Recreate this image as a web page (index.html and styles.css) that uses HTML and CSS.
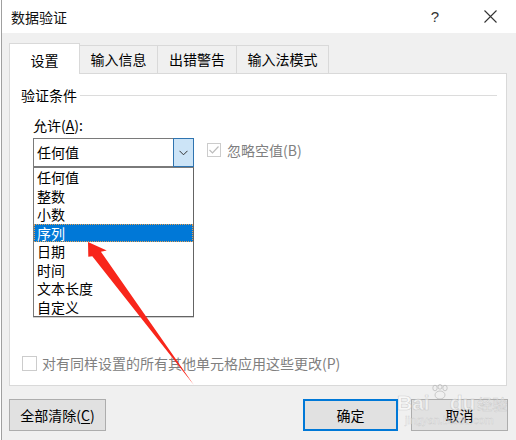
FILE: index.html
```html
<!DOCTYPE html>
<html lang="zh">
<head>
<meta charset="utf-8">
<title>数据验证</title>
<link rel="stylesheet" href="styles.css">
</head>
<body>
<div class="window">
  <div class="titlebar">
    <span class="title">数据验证</span>
    <span class="tb-btn help">?</span>
    <span class="tb-btn close">
      <svg width="13" height="13" viewBox="0 0 13 13"><path d="M0.5 0.5 L12.5 12.5 M12.5 0.5 L0.5 12.5" stroke="#333" stroke-width="1.1" fill="none"/></svg>
    </span>
  </div>
  <div class="main">
    <div class="tabs">
      <div class="tab active w1">设置</div>
      <div class="tab w2">输入信息</div>
      <div class="tab w3">出错警告</div>
      <div class="tab w4">输入法模式</div>
    </div>
    <div class="panel">
      <div class="group-head"><span>验证条件</span><span class="rule"></span></div>
      <div class="allow-label">允许(<u>A</u>):</div>
      <div class="row">
        <div class="combo">
          <span class="combo-text">任何值</span>
          <span class="combo-btn">
            <svg width="9" height="6" viewBox="0 0 9 6"><polyline points="0.5,0.8 4.5,4.8 8.5,0.8" fill="none" stroke="#333" stroke-width="1"/></svg>
          </span>
          <ul class="list">
            <li>任何值</li>
            <li>整数</li>
            <li>小数</li>
            <li class="selected">序列</li>
            <li>日期</li>
            <li>时间</li>
            <li>文本长度</li>
            <li>自定义</li>
          </ul>
        </div>
        <div class="check ignore">
          <span class="box checked">
            <svg width="12" height="12" viewBox="0 0 12 12"><polyline points="1.5,6 4.5,9 10.5,2.5" fill="none" stroke="#bcbcbc" stroke-width="1.2"/></svg>
          </span>
          <span class="check-text">忽略空值(B)</span>
        </div>
      </div>
      <div class="check apply">
        <span class="box big"></span>
        <span class="check-text">对有同样设置的所有其他单元格应用这些更改(P)</span>
      </div>
    </div>
    <div class="footer">
      <button class="btn clear">全部清除(<u>C</u>)</button>
      <span class="spacer"></span>
      <button class="btn ok">确定</button>
      <button class="btn cancel">取消</button>
    </div>
  </div>
</div>
<svg class="arrow" width="516" height="440" viewBox="0 0 516 440">
  <polygon transform="translate(88,242) rotate(53.5)" points="0,0 18,-10 15.5,-4.6 178,0 14,5 12,8.5" fill="#f8261b"/>
</svg>
<div class="wm">
  <div class="wm-line"><span class="wm-big">Bai</span><span class="wm-paw">
    <svg width="20" height="16" viewBox="0 0 20 16"><g fill="none" stroke="rgba(170,170,170,0.55)" stroke-width="1"><ellipse cx="5" cy="4" rx="2.2" ry="2.8"/><ellipse cx="10" cy="2.8" rx="2" ry="2.4"/><ellipse cx="15" cy="4" rx="2.2" ry="2.8"/><ellipse cx="10" cy="11" rx="5" ry="4"/></g></svg>
  </span><span class="wm-big">du</span><span class="wm-cn">经验</span></div>
  <div class="wm-url">jingyan.baidu.com</div>
</div>
</body>
</html>
```

FILE: styles.css
```css
html, body {
  margin: 0;
  padding: 0;
}
body {
  width: 516px;
  height: 440px;
  overflow: hidden;
  background: #ffffff;
  font-family: "Noto Sans CJK SC", "Noto Sans", "Liberation Sans", sans-serif;
  font-size: 14px;
  color: #000;
  position: relative;
}
.window {
  box-sizing: border-box;
  width: 515px;
  height: 440px;
  margin-left: 1px;
  border-left: 1px solid #a0a0a0;
  display: flex;
  flex-direction: column;
}
.titlebar {
  height: 33px;
  background: #ffffff;
  display: flex;
  align-items: center;
  padding-right: 6px;
}
.title {
  padding-left: 9px;
  font-size: 14px;
  line-height: 20px;
  color: #111;
}
.tb-btn {
  width: 40px;
  height: 33px;
  display: flex;
  align-items: center;
  justify-content: center;
}
.help {
  margin-left: auto;
  font-family: "Liberation Sans", sans-serif;
  font-size: 15px;
  color: #333;
}
.close {
  margin-left: 15px;
}
.main {
  flex: 1;
  background: #f0f0f0;
  padding: 10px 9px 0 7px;
  display: flex;
  flex-direction: column;
}
.tabs {
  height: 30px;
  display: flex;
  align-items: flex-end;
}
.tab {
  box-sizing: border-box;
  height: 28px;
  border-top: 1px solid #d9d9d9;
  border-right: 1px solid #d9d9d9;
  background: #f0f0f0;
  text-align: center;
  line-height: 27px;
  font-size: 14px;
}
.tab.active {
  height: 31px;
  margin-bottom: -1px;
  border-left: 1px solid #d9d9d9;
  background: #ffffff;
  padding-top: 2px;
  line-height: 28px;
  position: relative;
  z-index: 1;
}
.w1 { width: 71px; }
.w2 { width: 78px; }
.w3 { width: 79px; }
.w4 { width: 92px; }
.panel {
  box-sizing: border-box;
  height: 313px;
  border: 1px solid #d9d9d9;
  background: #ffffff;
  padding: 11px 9px 12px 11px;
  display: flex;
  flex-direction: column;
}
.group-head {
  height: 20px;
  display: flex;
  align-items: center;
  line-height: 20px;
}
.rule {
  flex: 1;
  border-top: 1px solid #dcdcdc;
  margin-left: 3px;
}
.allow-label {
  margin-top: 10px;
  margin-left: 12px;
  line-height: 20px;
}
.allow-label u, .btn u {
  text-underline-offset: 2px;
}
.row {
  margin-top: 3px;
  margin-left: 12px;
  display: flex;
  align-items: flex-start;
}
.combo {
  position: relative;
  box-sizing: border-box;
  width: 161px;
  height: 29px;
  border: 1px solid #7a7a7a;
  display: flex;
}
.combo-text {
  flex: 1;
  padding-left: 3px;
  line-height: 27px;
}
.combo-btn {
  box-sizing: border-box;
  width: 21px;
  height: 29px;
  margin: -1px -1px -1px 0;
  background: #cce4f7;
  border: 1px solid #2f74b0;
  display: flex;
  align-items: center;
  justify-content: center;
}
.list {
  position: absolute;
  top: 28px;
  left: -1px;
  box-sizing: border-box;
  width: 161px;
  margin: 0;
  padding: 0;
  list-style: none;
  background: #ffffff;
  border: 1px solid #7a7a7a;
  border-right-color: #646464;
  border-bottom-color: #646464;
  box-shadow: 0 1px 0 #d0d0d0;
  z-index: 2;
}
.list li {
  height: 18.5px;
  line-height: 18.5px;
  padding-left: 3px;
  font-size: 14px;
}
.list li.selected {
  background: #0078d7;
  color: #ffffff;
  outline: 1px dotted #e8a050;
  outline-offset: -1px;
}
.check {
  display: flex;
  align-items: center;
  line-height: 20px;
  color: #808080;
}
.ignore {
  margin-left: 13px;
  margin-top: 2px;
  gap: 6px;
}
.box {
  box-sizing: border-box;
  width: 14px;
  height: 14px;
  border: 1px solid #cccccc;
  background: #ffffff;
  display: flex;
  align-items: center;
  justify-content: center;
}
.box.big {
  width: 15px;
  height: 15px;
}
.apply {
  margin-top: auto;
  margin-left: 1px;
  gap: 5px;
}
.footer {
  margin-top: 13px;
  margin-right: -1px;
  display: flex;
}
.spacer {
  flex: 1;
}
.btn {
  box-sizing: border-box;
  height: 32px;
  padding: 0;
  border: 1px solid #adadad;
  background: #e1e1e1;
  font-family: "Noto Sans CJK SC", "Noto Sans", sans-serif;
  font-size: 14px;
  line-height: 20px;
  color: #000;
}
.clear { width: 97px; }
.ok {
  width: 95px;
  margin-right: 13px;
  border: 2px solid #0078d7;
}
.cancel { width: 97px; }
.arrow {
  position: absolute;
  left: 0;
  top: 0;
  z-index: 5;
  pointer-events: none;
}
.wm {
  position: absolute;
  left: 397px;
  top: 384px;
  z-index: 6;
  pointer-events: none;
  color: rgba(255, 255, 255, 0.55);
  font-family: "Liberation Sans", sans-serif;
}
.wm-line {
  display: flex;
  align-items: flex-end;
  height: 30px;
}
.wm-big {
  font-size: 21px;
  font-weight: bold;
  line-height: 22px;
  -webkit-text-stroke: 0.6px rgba(175, 175, 175, 0.55);
}
.wm-paw {
  align-self: flex-start;
}
.wm-cn {
  font-family: "Noto Sans CJK SC", sans-serif;
  font-size: 15px;
  line-height: 20px;
  margin-left: 2px;
  -webkit-text-stroke: 0.5px rgba(175, 175, 175, 0.55);
}
.wm-url {
  font-size: 11px;
  line-height: 12px;
  margin-left: 8px;
  color: rgba(255, 255, 255, 0.5);
  -webkit-text-stroke: 0.4px rgba(175, 175, 175, 0.5);
}
```
